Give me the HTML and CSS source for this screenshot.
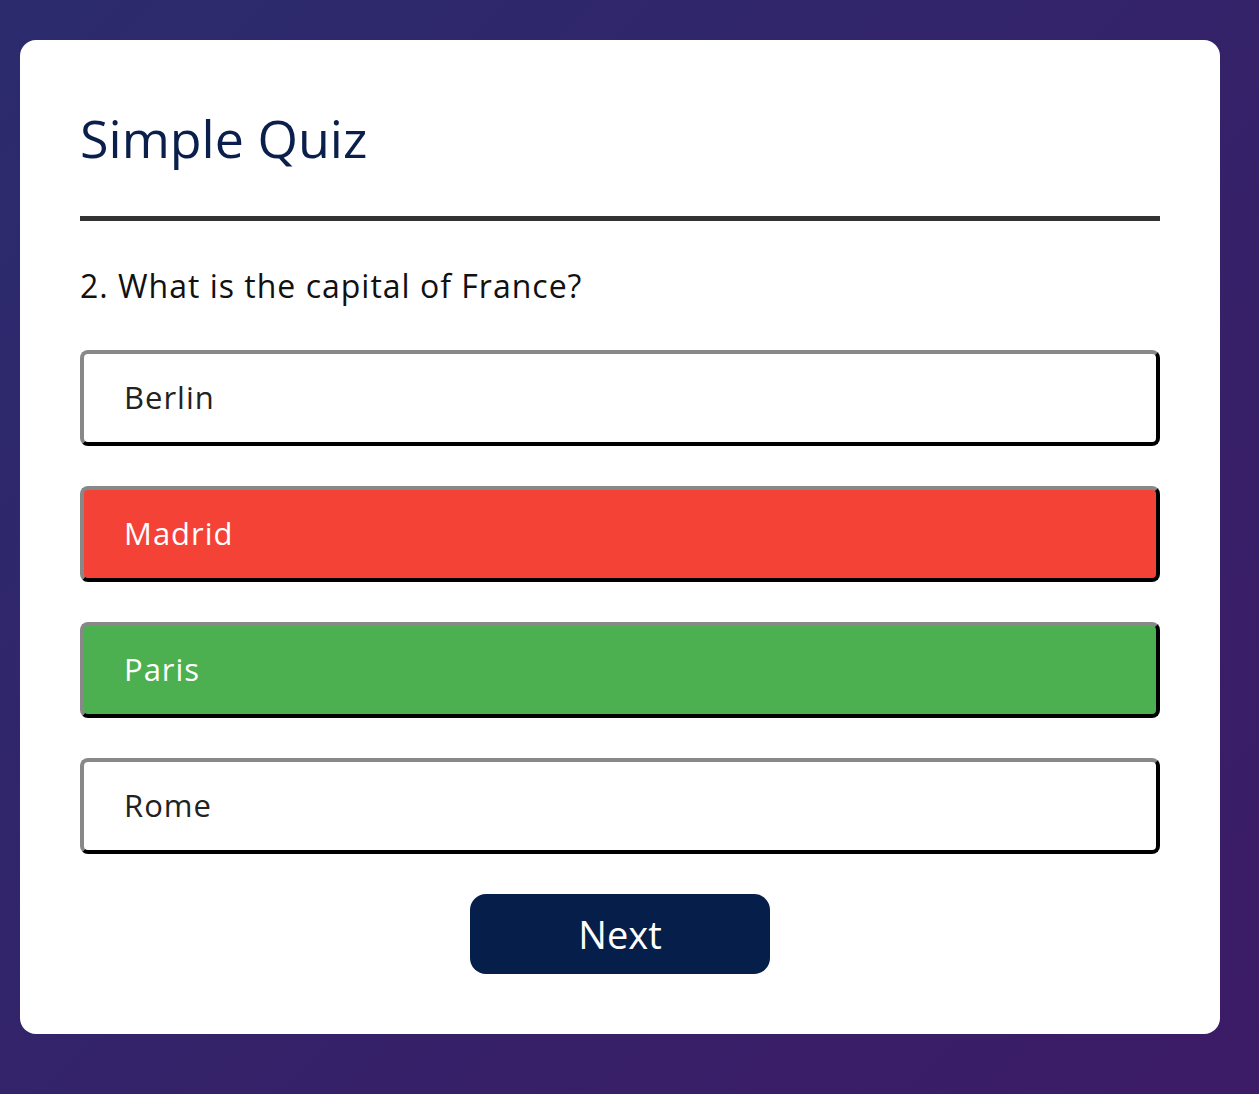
FILE: index.html
```html
<!DOCTYPE html>
<html>
<head>
<meta charset="utf-8">
<title>Simple Quiz</title>
<link rel="stylesheet" href="styles.css">
</head>
<body>
<div class="app">
  <h1 class="title">Simple Quiz</h1>
  <div class="quiz">
    <h2 class="question">2. What is the capital of France?</h2>
    <div class="answers">
      <button class="btn">Berlin</button>
      <button class="btn incorrect">Madrid</button>
      <button class="btn correct">Paris</button>
      <button class="btn">Rome</button>
    </div>
    <button class="next-btn">Next</button>
  </div>
</div>
</body>
</html>
```

FILE: styles.css
```css
* { box-sizing: border-box; }
html, body { margin: 0; }
body {
  min-height: 1094px;
  padding: 40px 20px;
  background: linear-gradient(135deg, #2b2b6e 0%, #3d1b66 100%);
  font-family: "Open Sans", "DejaVu Sans", sans-serif;
}
.app {
  width: 1200px;
  background: #fff;
  border-radius: 16px;
  padding: 60px 60px 60px;
}
.title {
  margin: 0;
  font-size: 52px;
  line-height: 76px;
  font-weight: 500;
  color: #0a1f4c;
  padding-bottom: 40px;
  border-bottom: 5px solid #333;
}
.quiz { padding-top: 40px; }
.question {
  margin: 0 0 39px;
  font-size: 32px;
  line-height: 50px;
  font-weight: 400;
  color: #111;
  letter-spacing: 1px;
}
.answers {
  display: flex;
  flex-direction: column;
  gap: 40px;
}
.btn {
  display: block;
  width: 100%;
  height: 96px;
  text-align: left;
  padding: 0 40px 2px;
  font-family: inherit;
  font-size: 31px;
  letter-spacing: 1px;
  color: #222;
  background: #fff;
  border: 4px solid;
  border-color: #888 #000 #000 #888;
  border-radius: 8px;
}
.btn.incorrect { background: #f44336; color: #fff; }
.btn.correct { background: #4caf50; color: #fff; }
.next-btn {
  display: block;
  margin: 40px auto 0;
  width: 300px;
  height: 80px;
  border: none;
  border-radius: 16px;
  background: #061f4a;
  color: #fff;
  font-family: inherit;
  font-size: 38px;
}
```
